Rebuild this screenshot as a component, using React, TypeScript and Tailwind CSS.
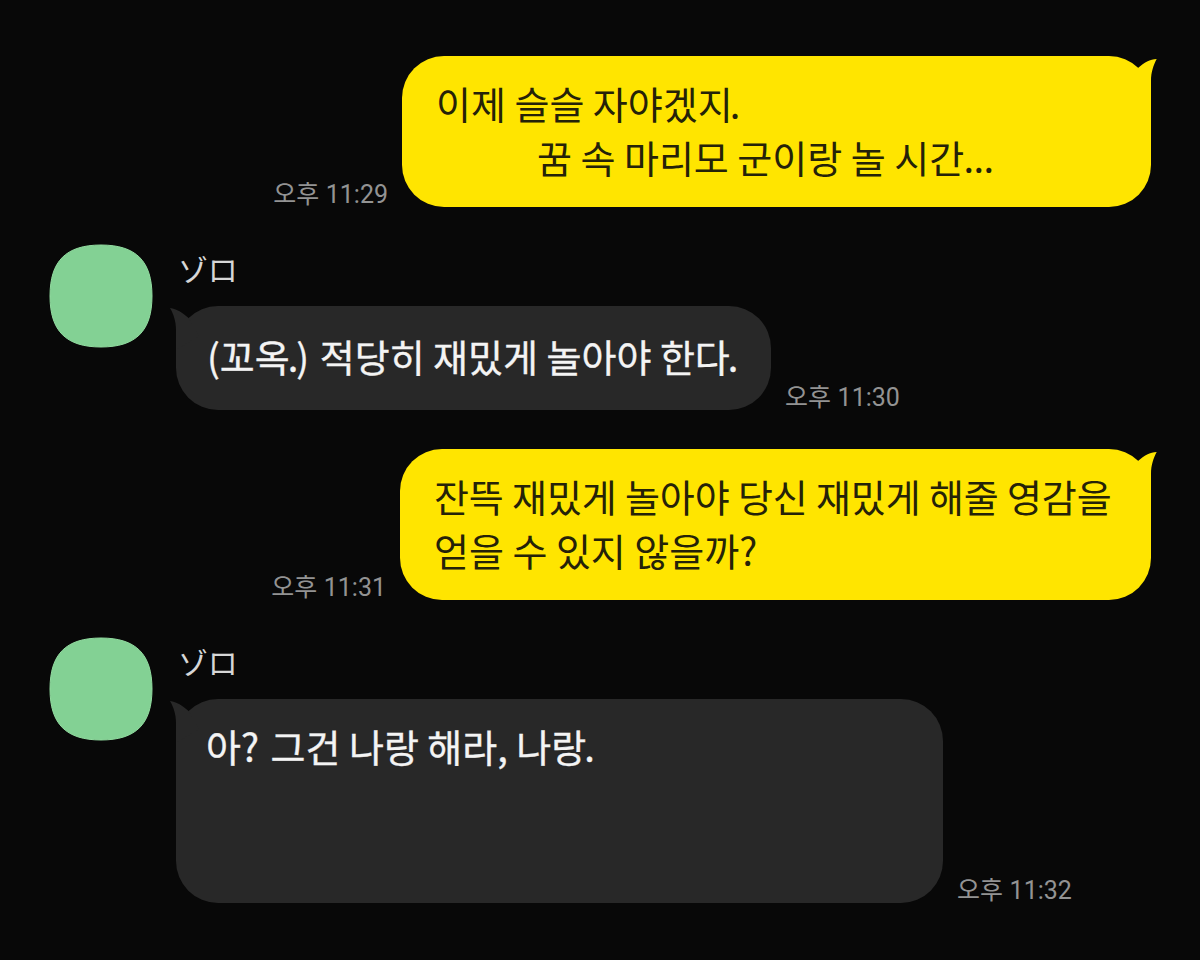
import type { ReactNode } from "react";

const BUBBLE = "relative flex flex-col rounded-[42px] text-[38px] leading-[54px] whitespace-nowrap";

function SentTail() {
  return (
    <svg className="absolute -top-px -right-[7px] h-[48px] w-[40px]" viewBox="0 0 40 48" fill="#ffe500">
      <path d="M20.3 12.8C26 7.5 32 4.4 38.7 4C35.5 10 33 17 33 26V46L10 30Z" />
    </svg>
  );
}

function ReceivedTail() {
  return (
    <svg className="absolute top-0 -left-[7px] h-[48px] w-[40px]" viewBox="0 0 40 48" fill="#282828">
      <path d="M19.3 11.8C13.5 6.5 8 3 1 2C4.5 8 7 15 7 24V44L30 30Z" />
    </svg>
  );
}

function Avatar() {
  return (
    <svg className="h-[104px] w-[104px] shrink-0" viewBox="0 0 104 104">
      <path
        d="M52 1C87 1 103 17 103 52C103 87 87 103 52 103C17 103 1 87 1 52C1 17 17 1 52 1Z"
        fill="#83d194"
        stroke="#91db9f"
      />
    </svg>
  );
}

function Time({ clock }: { clock: string }) {
  return (
    <time className="self-end text-[25px] leading-6 whitespace-nowrap text-[#939393]">
      오후 <span className="pl-px font-['Roboto',sans-serif]">{clock}</span>
    </time>
  );
}

function Sent({ clock, className, children }: { clock: string; className: string; children: ReactNode }) {
  return (
    <section className="flex justify-end gap-3.5">
      <Time clock={clock} />
      <div className={`${BUBBLE} h-[151px] bg-[#ffe500] pt-5 pl-[34px] text-[#252208] ${className}`}>
        <SentTail />
        {children}
      </div>
    </section>
  );
}

function Received({ clock, className, children }: { clock: string; className: string; children: ReactNode }) {
  return (
    <section className="flex gap-3.5">
      <div className="flex gap-[23px]">
        <Avatar />
        <div className="flex flex-col gap-[18px] pt-1">
          <h2 className="pl-0.5 text-[30px] leading-10 font-normal tracking-[-0.2px] whitespace-nowrap text-[#d6d6d6]">ゾロ</h2>
          <div className={`${BUBBLE} bg-[#282828] text-[#f4f4f4] [-webkit-text-stroke:0.35px_#f4f4f4] ${className}`}>
            <ReceivedTail />
            {children}
          </div>
        </div>
      </div>
      <Time clock={clock} />
    </section>
  );
}

export default function App() {
  return (
    <main className="flex h-[960px] w-[1200px] flex-col gap-[38px] overflow-hidden bg-[#080808] px-[49px] pt-14 font-['Noto_Sans_CJK_KR','Noto_Sans_CJK_JP',sans-serif]">
      <div className="flex flex-col gap-[37px]">
        <Sent clock="11:29" className="w-[749px]">
          <p>이제 슬슬 자야겠<span className="tracking-[-3px]">지.</span></p>
          <p className="pl-[101px]">꿈 속 마리모 군이랑 놀 시<span className="tracking-[-0.6px]">간...</span></p>
        </Sent>
        <Received clock="11:30" className="h-[104px] w-[595px] pt-[23px] pl-[31px]">
          <p>(꼬<span className="tracking-[-2px]">옥.</span><span className="pr-0.5">)</span> 적당히 재밌게 놀아야 한<span className="tracking-[-2px]">다.</span></p>
        </Received>
      </div>
      <div className="flex flex-col gap-[37px] pt-px">
        <Sent clock="11:31" className="w-[751px]">
          <p className="tracking-[-0.12px]">잔뜩 재밌게 놀아야 당신 재밌게 해줄 영감을</p>
          <p>얻을 수 있지 않을까?</p>
        </Sent>
        <Received clock="11:32" className="h-[204px] w-[767px] pt-5 pl-[30px]">
          <p>아<span className="pr-[3px]">?</span> 그건 나랑 해라, 나<span className="tracking-[-2px]">랑.</span></p>
        </Received>
      </div>
    </main>
  );
}
